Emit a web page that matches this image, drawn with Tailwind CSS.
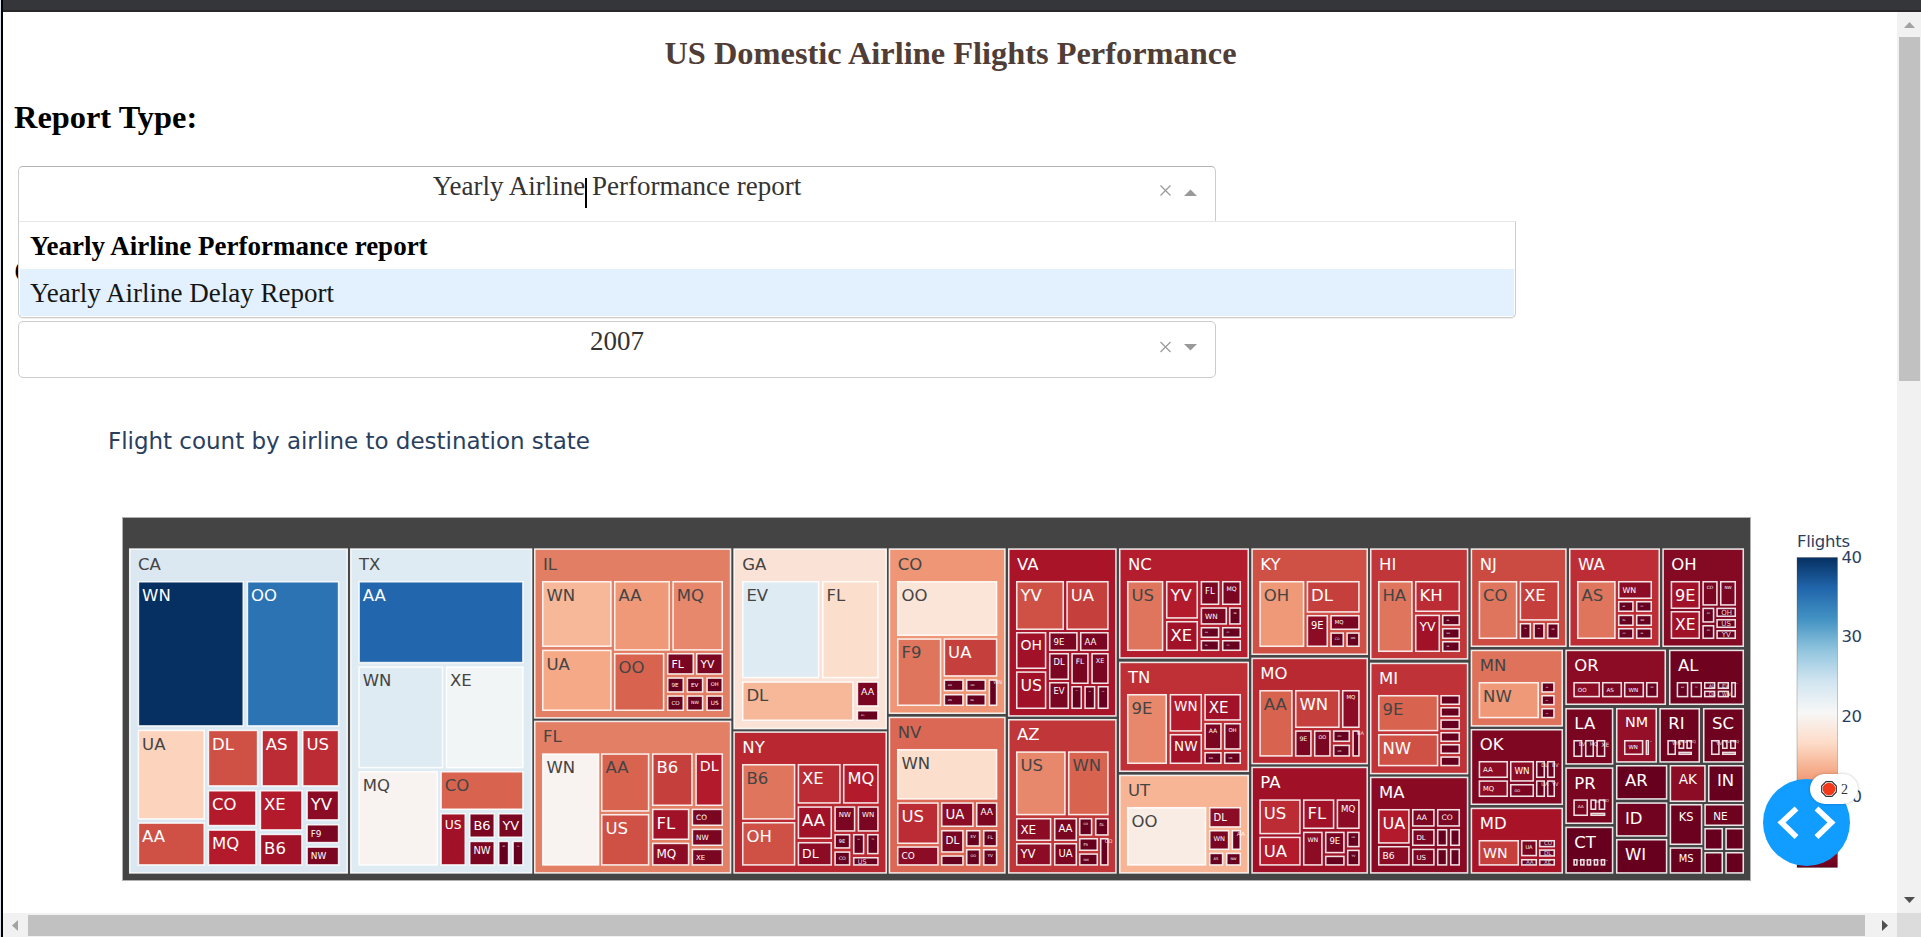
<!DOCTYPE html>
<html lang="en">
<head>
<meta charset="utf-8">
<title>US Domestic Airline Flights Performance</title>
<script src="https://cdn.jsdelivr.net/npm/@tailwindcss/browser@4"></script>
</head>
<body class="h-screen overflow-hidden bg-white font-['Liberation_Serif',serif] border-l border-[#dbe3ee]">
<div class="h-full flex flex-col border-l-2 border-black">
<header class="h-[12px] shrink-0 bg-[#35363a] border-b-2 border-[#29272a]"></header>
<div class="flex-1 min-h-0 flex">
  <main class="flex-1 min-w-0 flex flex-col">
    <div class="flex-1 min-h-0 flex flex-col pl-[11px] overflow-hidden">
      <h1 class="mt-[21px] h-10 shrink-0 leading-10 text-[32.4px] font-bold text-[#503D36] w-[1873px] text-center whitespace-nowrap">US Domestic Airline Flights Performance</h1>
      <h2 class="mt-6 h-10 shrink-0 leading-10 text-[32.4px] font-bold text-black whitespace-nowrap">Report Type:</h2>
      <div class="relative z-10 mt-[29px] ml-1 w-[1198px] h-[56px] shrink-0 border border-b-0 border-[#ccc] border-t-[#b3b3b3] rounded-t-[5px] flex items-start">
        <div class="flex-1 pl-[70px] text-center text-[27px] leading-[38px] text-[#333]"><span class="relative">Yearly Airline Performance report<i class="absolute left-[152px] top-0 w-[2px] h-[30px] bg-black mt-[7px]"></i></span></div>
        <svg class="w-[70px] h-[55px]" viewBox="0 0 70 55"><path d="M15.500 18.500l10 10M25.500 18.500l-10 10" stroke="#999" stroke-width="1.2"/><path d="M39 29h13l-6.500-6.500z" fill="#999"/></svg>
        <div class="absolute left-[-1px] top-[54px] w-[1498px] h-[97px] bg-white border border-[#ccc] border-t-[#e6e6e6] rounded-b-[5px] shadow-[0_1px_0_rgba(0,0,0,0.06)] p-px text-[27px]">
          <div class="h-[46px] leading-[47px] pl-[10px] font-bold text-black">Yearly Airline Performance report</div>
          <div class="h-[47px] leading-[48px] pl-[10px] bg-[#e3f1fe] text-[#151515]">Yearly Airline Delay Report</div>
        </div>
      </div>
      <h2 class="mt-[29px] h-10 shrink-0 leading-10 text-[32.4px] font-bold text-black">Choose Year:</h2>
      <div class="mt-[30px] ml-1 w-[1198px] h-[57px] shrink-0 border border-[#ccc] rounded-[5px] flex items-start">
        <div class="flex-1 pl-[70px] text-center text-[27px] leading-[38px] text-[#333]">2007</div>
        <svg class="w-[70px] h-[55px]" viewBox="0 0 70 55"><path d="M15.500 20l10 10M25.500 20l-10 10" stroke="#999" stroke-width="1.2"/><path d="M39 22h13l-6.500 6.500z" fill="#999"/></svg>
      </div>
      <svg id="chart" class="block shrink-0 -ml-[14px] mt-[13px] w-[1897px] h-[522px]" viewBox="0 391 1897 522" font-family="'DejaVu Sans',sans-serif">
        <defs><linearGradient id="rdbu" x1="0" y1="1" x2="0" y2="0">
          <stop offset="0" stop-color="#67001f"/><stop offset=".1" stop-color="#b2182b"/><stop offset=".2" stop-color="#d6604d"/><stop offset=".3" stop-color="#f4a582"/><stop offset=".4" stop-color="#fddbc7"/><stop offset=".5" stop-color="#f7f7f7"/><stop offset=".6" stop-color="#d1e5f0"/><stop offset=".7" stop-color="#92c5de"/><stop offset=".8" stop-color="#4393c3"/><stop offset=".9" stop-color="#2166ac"/><stop offset="1" stop-color="#053061"/>
        </linearGradient></defs>
        <text x="108" y="449" font-size="23" fill="#2a3f5f" textLength="482">Flight count by airline to destination state</text>
        <rect x="122.500" y="517.500" width="1628" height="363" fill="#444" stroke="#b0b0b0"/>
        <g id="tiles"></g>
        <rect x="1797" y="557.500" width="40.500" height="310" fill="url(#rdbu)" stroke="#444" stroke-opacity=".4" stroke-width=".7"/>
        <g font-size="16.500" fill="#2a3f5f">
          <text x="1797" y="547" textLength="53">Flights</text>
          <text x="1841.500" y="563" textLength="20.500">40</text><text x="1841.500" y="642" textLength="20.500">30</text><text x="1841.500" y="722" textLength="20.500">20</text><text x="1841.500" y="802" textLength="20.500">10</text>
        </g>
      </svg>
    </div>
    <div class="h-[24px] shrink-0 bg-[#f1f1f1] flex items-center">
      <svg class="w-[25px] h-6" viewBox="0 0 25 24"><path d="M15 7v11l-6-5.500z" fill="#a3a3a3"/></svg>
      <div class="h-[21px] w-[1837px] bg-[#c1c1c1]"></div>
      <svg class="w-8 h-6" viewBox="0 0 32 24"><path d="M17 7v11l6-5.500z" fill="#505050"/></svg>
    </div>
  </main>
  <aside class="w-[24px] shrink-0 bg-[#f1f1f1] flex flex-col items-center">
    <svg class="w-6 h-[25px] shrink-0" viewBox="0 0 24 25"><path d="M7 16h11l-5.500-6z" fill="#a3a3a3"/></svg>
    <div class="w-[21px] h-[344px] ml-px bg-[#c1c1c1] shrink-0"></div>
    <div class="flex-1"></div>
    <svg class="w-6 h-[24px] shrink-0" viewBox="0 0 24 24"><path d="M7 8h11l-5.500 6z" fill="#505050"/></svg>
    <div class="w-6 h-6 bg-[#dcdcdc] shrink-0"></div>
  </aside>
</div>
</div>
<button class="absolute left-[1763px] top-[779px] size-[87px] rounded-full bg-[#119dff] z-20" aria-label="Dev tools">
  <svg class="size-[87px]" viewBox="0 0 87 87" fill="none" stroke="#fff" stroke-width="5.600"><path d="M33.500 29.500L18.500 43.500L33.500 58M53.500 29.500L68.500 43.500L53.500 58"/></svg>
</button>
<div class="absolute left-[1810px] top-[774px] w-[48px] h-[30px] rounded-full bg-white shadow-[0_0_3px_rgba(0,0,0,0.25)] z-30 flex items-center pl-[11px] gap-[4px] text-[14px] text-[#333]">
  <svg class="size-4" viewBox="0 0 16 16"><path d="M5 .7h6L15.300 5v6L11 15.300H5L.7 11V5z" fill="#fff" stroke="#333" stroke-width="1.200"/><circle cx="8" cy="8" r="6.300" fill="#f4391b"/></svg>
  <span>2</span>
</div>
<script>
// One block per group of columns: first line is the origin; "S" opens a state, other lines are airline tiles
// (label, flights, x1 y1 x2 y2, in thirds of a pixel); "T" is a free caption.
const DATA = `O 110 500
S CA #dbe8f1 57 145 714 1121
WN 40 83 243 402 680
OO 35 410 243 688 680
UA 16 83 689 285 959
AA 8 83 967 285 1097
DL 8 293 689 445 860
AS 6 454 689 567 860
US 6 576 689 688 860
CO 5 293 870 440 979
MQ 5 293 988 440 1097
XE 5 449 870 578 992
B6 4 449 1001 578 1097
YV 3 589 870 688 962
F9 2 589 972 688 1030
NW 2 589 1039 688 1097
S TX #deebf2 720 145 1267 1121
AA 36 745 243 1241 490
WN 23 745 499 1000 805
XE 21 1007 499 1241 805
MQ 20 745 813 984 1097
CO 9 991 813 1241 930
US 4 991 939 1068 1097
B6 2 1077 939 1155 1014
YV 2 1164 939 1241 1014
NW 2 1077 1022 1155 1097
9E 1 1164 1022 1198 1097
OH 1 1207 1022 1241 1097
O 520 500
S IL #e27e63 42 145 634 656
WN 14 66 243 275 441
UA 13 66 449 275 633
AA 12 282 243 450 452
MQ 11 457 243 609 452
OO 9 282 459 433 633
FL 2 441 459 522 524
YV 2 528 459 609 524
9E 1 441 532 492 578
EV 1 500 532 550 578
OH 1 559 532 609 578
CO 1 441 586 492 633
NW 1 500 586 550 633
US 1 559 586 609 633
S FL #e27f64 42 662 634 1121
WN 20 66 760 238 1097
AA 9 243 760 388 935
US 8 243 942 388 1097
B6 7 396 760 518 918
DL 5 526 760 609 918
FL 4 396 926 508 1020
MQ 3 396 1028 508 1097
CO 2 515 926 609 978
NW 2 515 986 609 1038
XE 2 515 1046 609 1097
S GA #fbe2d6 640 145 1101 688
EV 23 666 243 898 535
FL 17 906 243 1076 535
DL 14 666 544 1001 663
AA 2 1010 544 1076 620
MQ 1 1010 630 1076 663
S NY #b92831 640 694 1101 1121
B6 10 666 792 826 959
OH 8 666 966 826 1097
XE 6 833 792 962 911
MQ 5 969 792 1076 911
AA 4 833 919 936 1017
DL 3 833 1026 936 1097
NW 2 943 919 1006 995
WN 2 1013 919 1076 995
9E 1 943 1002 991 1046
CO 1 943 1054 991 1097
FL 1 999 1002 1033 1063
YV 1 1041 1002 1076 1063
- 1 999 1071 1076 1097
T US 1013 1092 6.5
O 880 500
S CO #ee9676 26 145 377 642
OO 18 51 243 352 408
F9 10 51 415 184 618
UA 7 191 415 352 530
AA 1 191 538 251 574
CO 1 258 538 318 574
AS 1 191 582 251 618
DL 1 258 582 318 618
- 1 326 538 352 618
T WN 340 553 5
S NV #da6855 26 650 377 1121
WN 17 51 747 352 899
US 6 51 907 176 1032
CO 3 51 1039 176 1097
UA 3 183 907 281 981
AA 2 288 907 352 981
DL 2 183 990 251 1058
- 1 183 1066 251 1097
EV 1 258 990 301 1040
FL 1 309 990 352 1040
OO 1 258 1047 301 1097
YV 1 309 1047 352 1097
S VA #a91429 384 145 710 650
YV 8 408 243 552 390
UA 7 559 243 686 390
OH 4 408 396 499 507
US 4 408 514 499 627
9E 2 507 396 593 453
AA 2 600 396 686 453
DL 2 507 459 567 540
EV 2 507 546 567 627
FL 2 574 459 626 552
XE 2 634 459 686 552
CO 1 574 558 606 627
MQ 1 613 558 646 627
NW 1 653 558 686 627
S AZ #c13638 384 657 710 1121
US 11 408 754 557 946
WN 9 564 754 686 946
XE 3 408 954 514 1023
YV 3 408 1029 514 1097
AA 2 522 954 591 1023
UA 2 522 1029 591 1097
CO 1 597 954 637 1007
DL 1 645 954 686 1007
F9 1 597 1014 654 1053
NW 1 597 1060 654 1097
- 1 660 1014 686 1097
T OO 674 1028 5
S NC #b41d2d 717 145 1107 476
US 10 741 243 850 453
YV 5 858 243 954 356
XE 4 858 363 954 453
FL 2 962 243 1018 315
MQ 2 1026 243 1083 315
WN 2 962 322 1041 374
9E 1 1047 322 1083 374
AA 1 962 381 1018 414
CO 1 1026 381 1083 414
DL 1 962 420 1018 453
OH 1 1026 420 1083 453
S TN #bf3036 717 485 1107 816
9E 11 741 582 861 792
WN 5 869 582 966 695
NW 4 869 702 966 792
XE 4 973 582 1083 662
AA 2 973 669 1025 749
OH 2 1032 669 1083 749
CO 1 973 756 1025 792
US 1 1032 756 1083 792
S UT #f7b596 717 824 1107 1121
OO 19 741 921 979 1097
DL 3 987 921 1083 983
WN 2 987 990 1048 1050
AS 1 987 1058 1030 1097
NW 1 1038 1058 1083 1097
- 1 1055 990 1083 1050
T AA 1070 1007 6
O 1240 500
S KY #cf5045 34 145 384 465
OH 12 58 243 193 441
DL 7 200 243 359 338
9E 3 200 345 264 441
MQ 2 271 345 359 390
CO 1 271 397 312 441
WN 1 319 397 359 441
S MO #b92932 34 473 384 793
AA 9 58 570 158 770
WN 7 165 570 299 684
MQ 3 306 570 359 684
9E 2 165 691 215 770
OO 2 222 691 272 770
CO 1 279 691 330 726
US 1 279 734 330 770
- 1 337 691 359 770
T NA 350 705 5
S PA #a01128 34 800 384 1121
US 6 58 898 182 1003
UA 5 58 1010 182 1097
FL 4 189 898 283 987
MQ 3 290 898 359 987
WN 3 189 995 248 1097
9E 2 255 995 314 1060
- 1 255 1067 314 1097
OH 1 321 995 359 1042
YV 1 321 1049 359 1097
S HI #c13638 390 145 685 479
HA 10 414 243 518 456
KH 6 525 243 660 336
YV 4 525 344 600 456
AA 1 606 344 660 377
NW 1 606 384 660 417
UA 1 606 423 660 456
S MI #bf3237 390 488 685 823
9E 9 414 585 595 694
NW 8 414 702 595 799
- 1 601 585 660 615
- 1 601 621 660 651
- 1 601 658 660 689
- 1 601 696 660 726
- 1 601 732 660 762
- 1 601 769 660 799
S MA #8a0a24 390 830 685 1121
UA 5 414 927 509 1031
B6 3 414 1038 509 1097
AA 2 516 927 584 980
CO 2 591 927 660 980
DL 2 516 987 584 1038
US 2 516 1046 584 1097
- 1 591 987 622 1038
- 1 630 987 660 1038
- 1 591 1046 622 1097
- 1 630 1046 660 1097
S NJ #cb4a42 692 145 980 441
CO 10 716 243 832 417
XE 7 839 243 957 362
OH 1 839 369 873 417
NW 1 880 369 914 417
US 1 921 369 957 417
S MN #df725b 692 449 969 680
NW 12 716 546 897 655
AA 1 904 546 944 578
OO 1 904 585 944 616
MQ 1 904 624 944 655
S OK #7f0722 692 687 969 915
AA 3 716 783 804 834
MQ 3 716 841 804 891
WN 3 810 783 882 845
OO 2 810 852 882 891
- 1 888 783 915 834
- 1 921 783 945 834
- 1 888 841 915 891
- 1 921 841 945 891
T DL 904 800 5
T EV 936 800 5
T UA 904 857 5
T YV 936 857 5
S MD #a91328 692 923 969 1121
WN 7 716 1020 837 1097
UA 2 843 1020 891 1069
- 1 843 1077 891 1097
- 1 897 1020 945 1042
- 1 897 1048 945 1070
- 1 897 1077 945 1097
T CO 912 1035 5.5
T DL 912 1064 5.5
T XE 912 1092 5.5
T AA 859 1092 5
O 1460 500
S WA #bd2d35 327 145 600 441
AS 10 351 243 467 417
WN 3 474 243 576 297
AA 1 474 303 521 336
CO 1 528 303 576 336
DL 1 474 344 521 378
NW 1 528 344 576 378
OO 1 474 384 521 417
UA 1 528 384 576 417
S OH #840923 607 145 852 441
9E 4 632 243 720 327
XE 4 632 333 720 417
CO 2 727 243 773 317
NW 2 780 243 828 317
AA 1 727 323 763 368
MQ 1 727 375 763 417
- 1 769 323 828 351
- 1 769 357 828 384
- 1 769 390 828 417
T OH 784 345 7
T US 784 378 7
T YV 785 411 7
S OR #8c0b25 316 449 618 615
OO 3 340 546 420 592
AS 2 426 546 486 592
WN 2 492 546 552 592
UA 1 558 546 594 592
S AL #6f021f 627 449 852 615
AA 1 650 546 685 592
CO 1 692 546 726 592
- 1 732 546 766 567
- 1 773 546 807 567
- 1 732 572 766 592
- 1 773 572 807 592
- 1 813 546 828 592
T AL 746 563 5
T EV 786 563 5
T DL 746 588 5
T WN 786 588 5
T - 828 556 5
S LA #7a0520 316 624 460 794
- 1 340 720 367 771
- 1 375 720 402 771
- 1 409 720 436 771
T EV 356 739 5
T MQ 389 739 5
T XE 424 741 6
S NM #940f27 468 624 591 788
WN 3 492 720 550 765
- 1 557 720 567 765
T - 570 728 5
S RI #6f021f 598 624 720 788
- 1 622 720 648 765
- 1 655 720 673 747
- 1 679 720 696 747
- 1 655 755 696 765
T WN 637 736 5
T NW 664 730 4
T MQ 688 730 4
S SC #6f021f 729 624 852 788
- 1 753 720 779 765
- 1 786 720 803 747
- 1 810 720 828 747
- 1 786 755 828 765
T YV 768 736 5
T EV 795 730 4
T MQ 818 730 4
S PR #7a0520 316 802 460 972
AA 2 340 898 384 948
- 1 391 898 409 930
- 1 416 898 436 930
- 1 391 938 436 948
T B6 404 909 4
T OO 428 907 4
S CT #67001f 316 980 460 1121
- 1 340 1077 353 1097
- 1 360 1077 374 1097
- 1 380 1077 394 1097
- 1 401 1077 415 1097
- 1 422 1077 436 1097
T - 354 1087 6
T - 375 1087 6
T - 395 1087 6
T - 416 1087 6
T - 437 1087 6
S AR #67001f 468 795 622 899
S ID #720320 468 907 622 1010
S WI #67001f 468 1017 622 1121
S AK #8c0b25 629 795 737 906
S IN #67001f 744 795 852 906
S KS #6c011f 629 912 727 1035
S MS #67001f 629 1042 727 1121
S NE #6f021f 733 912 852 978
S - #67001f 733 984 789 1050
S - #67001f 796 984 852 1050
S - #67001f 733 1056 789 1121
S - #67001f 796 1056 852 1121`;
const STOPS = ['67001f','b2182b','d6604d','f4a582','fddbc7','f7f7f7','d1e5f0','92c5de','4393c3','2166ac','053061'];
const rgb = h => [0,2,4].map(i => parseInt(h.substr(i,2),16));
const scale = v => { const t=(v-1)/3.9, i=Math.min(9,Math.floor(t)), a=rgb(STOPS[i]), b=rgb(STOPS[i+1]); return a.map((c,k)=>Math.round(c+(b[k]-c)*(t-i))); };
const ink = c => (c[0]*299+c[1]*587+c[2]*114)/1000 < 128 ? '#fff' : '#444';
const ctx = document.createElement('canvas').getContext('2d'); ctx.font = "100px 'DejaVu Sans'";
const tw = s => ctx.measureText(s).width/100;
let ox=0, oy=0, out='';
for (const line of DATA.split('\n')) {
  const p = line.split(' ');
  if (p[0]==='O') { ox=+p[1]; oy=+p[2]; continue; }
  if (p[0]==='T') { out += `<text x="${ox+p[2]/3}" y="${oy+p[3]/3}" font-size="${p[4]}" fill="#fff" fill-opacity=".85">${p[1]}</text>`; continue; }
  const state = p[0]==='S'; if (state) p.shift();
  const [x1,y1,x2,y2] = p.slice(2).map(Number).map((n,i)=>n/3+(i%2?oy:ox));
  const c = state ? rgb(p[1].slice(1)) : scale(+p[1]), w=x2-x1, h=y2-y1;
  out += `<rect x="${x1+.75}" y="${y1+.75}" width="${w-1.5}" height="${h-1.5}" fill="rgb(${c})" stroke="#fff" stroke-opacity=".88" stroke-width="1.55"/>`;
  if (p[0]==='-') continue;
  const fs = Math.min(16.5, state ? Math.min((w-17.8)/tw(p[0]), (h-9.5)/1.2) : Math.min((w-8.8)/tw(p[0]), (h-8.6)/1.2));
  if (fs < .8) continue;
  const bx = x1+(state?9:4.4), by = y1+(state?5.8+.94*fs:4.3+.95*fs);
  out += `<text x="${bx}" y="${by}" font-size="${fs}" fill="${ink(c)}">${p[0]}</text>`;
}
document.getElementById('tiles').innerHTML = out;
</script>
</body>
</html>
